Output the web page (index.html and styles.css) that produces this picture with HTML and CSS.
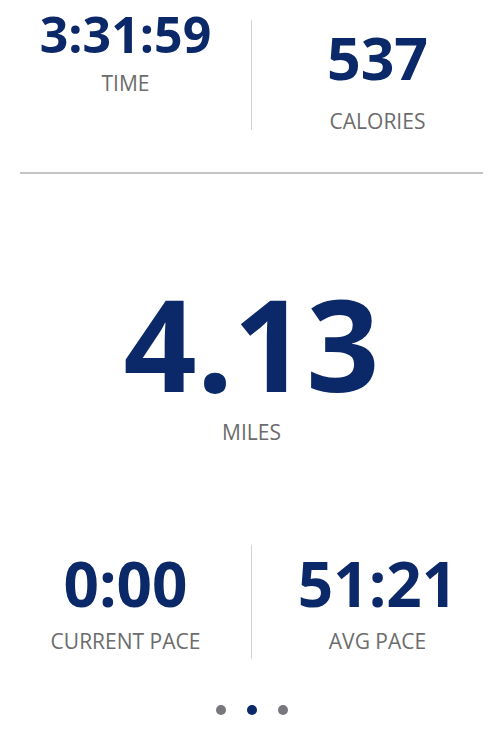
FILE: index.html
```html
<!DOCTYPE html>
<html>
<head>
<meta charset="utf-8">
<link rel="stylesheet" href="styles.css">
</head>
<body>
<div class="screen">
  <section class="row row-top">
    <div class="col col-time">
      <div class="value v-time">3:31:59</div>
      <div class="label l-time">TIME</div>
    </div>
    <div class="vdiv vdiv-top"></div>
    <div class="col col-cal">
      <div class="value v-cal">537</div>
      <div class="label l-cal">CALORIES</div>
    </div>
  </section>
  <hr class="hdiv">
  <section class="main">
    <div class="value v-miles">4.13</div>
    <div class="label l-miles">MILES</div>
  </section>
  <section class="row row-bottom">
    <div class="col col-pace">
      <div class="value v-pace">0:00</div>
      <div class="label l-pace">CURRENT PACE</div>
    </div>
    <div class="vdiv vdiv-bottom"></div>
    <div class="col col-pace">
      <div class="value v-pace">51:21</div>
      <div class="label l-pace">AVG PACE</div>
    </div>
  </section>
  <div class="dots">
    <span class="dot"></span>
    <span class="dot dot-active"></span>
    <span class="dot"></span>
  </div>
</div>
</body>
</html>
```
FILE: styles.css
```css
html, body {
  margin: 0;
  padding: 0;
  background: #ffffff;
}
.screen {
  width: 503px;
  height: 744px;
  font-family: "Open Sans", "Noto Sans", sans-serif;
  display: flex;
  flex-direction: column;
  overflow: hidden;
}
.row {
  display: flex;
  align-items: flex-start;
}
.col {
  flex: 1;
  display: flex;
  flex-direction: column;
  align-items: center;
  text-align: center;
}
.value {
  color: #0b2868;
  font-weight: 700;
  white-space: nowrap;
}
.label {
  color: #6c6c6c;
  font-size: 21px;
  line-height: 21px;
  font-weight: 400;
  white-space: nowrap;
}
.vdiv {
  width: 1px;
  flex: 0 0 1px;
  background: #d2d2d2;
}
.row-top {
  height: 172px;
}
.col-time {
  padding-top: 9px;
}
.v-time {
  font-size: 50px;
  line-height: 50px;
}
.l-time {
  margin-top: 14px;
}
.vdiv-top {
  margin-top: 20px;
  height: 110px;
}
.col-cal {
  padding-top: 28px;
}
.v-cal {
  font-size: 59px;
  line-height: 59px;
}
.l-cal {
  margin-top: 24px;
}
.hdiv {
  margin: 0 20px;
  border: 0;
  height: 2px;
  background: #c4c4c4;
}
.main {
  margin-top: 105px;
  display: flex;
  flex-direction: column;
  align-items: center;
}
.v-miles {
  font-size: 128px;
  line-height: 128px;
}
.l-miles {
  margin-top: 15px;
}
.row-bottom {
  margin-top: 102px;
}
.vdiv-bottom {
  height: 114px;
}
.col-pace {
  padding-top: 7px;
}
.v-pace {
  font-size: 62px;
  line-height: 62px;
}
.l-pace {
  margin-top: 17px;
}
.dots {
  margin-top: 46px;
  display: flex;
  justify-content: center;
  gap: 21px;
}
.dot {
  width: 10px;
  height: 10px;
  border-radius: 50%;
  background: #77777d;
}
.dot-active {
  background: #0b2868;
}
```
